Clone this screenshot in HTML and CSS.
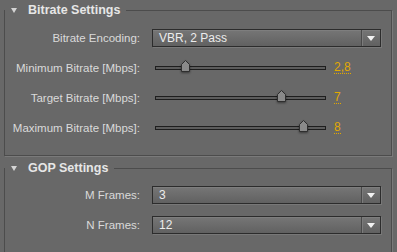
FILE: index.html
```html
<!DOCTYPE html>
<html lang="en">
<head>
	<meta charset="UTF-8">
	<title>Encoder settings</title>
	<link rel="stylesheet" href="styles.css">
</head>
<body>
	<fieldset class="group">
		<legend class="group-title"><span class="twisty"></span>Bitrate Settings</legend>
		<div class="row">
			<label class="row-label">Bitrate Encoding:</label>
			<div class="select"><span class="select-value">VBR, 2 Pass</span><span class="select-arrow"></span></div>
		</div>
		<div class="row">
			<label class="row-label">Minimum Bitrate [Mbps]:</label>
			<div class="slider">
				<div class="slider-track"></div>
				<svg class="slider-thumb" style="left: 26px" width="10" height="13" viewBox="0 0 10 13"><polygon points="0.5,4.5 4.5,0.5 8.5,4.5 8.5,11.5 0.5,11.5"/></svg>
			</div>
			<span class="slider-value">2,8</span>
		</div>
		<div class="row">
			<label class="row-label">Target Bitrate [Mbps]:</label>
			<div class="slider">
				<div class="slider-track"></div>
				<svg class="slider-thumb" style="left: 122px" width="10" height="13" viewBox="0 0 10 13"><polygon points="0.5,4.5 4.5,0.5 8.5,4.5 8.5,11.5 0.5,11.5"/></svg>
			</div>
			<span class="slider-value">7</span>
		</div>
		<div class="row">
			<label class="row-label">Maximum Bitrate [Mbps]:</label>
			<div class="slider">
				<div class="slider-track"></div>
				<svg class="slider-thumb" style="left: 144px" width="10" height="13" viewBox="0 0 10 13"><polygon points="0.5,4.5 4.5,0.5 8.5,4.5 8.5,11.5 0.5,11.5"/></svg>
			</div>
			<span class="slider-value">8</span>
		</div>
	</fieldset>

	<fieldset class="group gop">
		<legend class="group-title"><span class="twisty"></span>GOP Settings</legend>
		<div class="row">
			<label class="row-label">M Frames:</label>
			<div class="select"><span class="select-value">3</span><span class="select-arrow"></span></div>
		</div>
		<div class="row">
			<label class="row-label">N Frames:</label>
			<div class="select"><span class="select-value">12</span><span class="select-arrow"></span></div>
		</div>
	</fieldset>
</body>
</html>
```

FILE: styles.css
```css
body{
	margin: 0; padding: 0 5px 0 4px;
	background: #686868;
	font-family: "Liberation Sans", Arial, sans-serif;
	font-size: 11.5px;
	color: #dadada;
	overflow: hidden;
}
/* panel group */
.group{
	margin: 3px 0 0; padding: 6px 10px 12px 0;
	border: 1px solid #4c4c4c;
	box-shadow: 1px 1px 0 #7a7a7a;
	min-width: 0;
}
.group.gop{margin-top: 5px; padding-top: 5px;}
.group-title{
	display: flex; align-items: center;
	padding: 0 6px;
	font-size: 12.5px; font-weight: bold; line-height: 14px;
	color: #e6e6e6;
}
.twisty{
	width: 0; height: 0; margin-right: 11px;
	border-left: 3px solid transparent;
	border-right: 3px solid transparent;
	border-top: 5px solid #d4d4d4;
}
/* rows */
.row{display: flex; align-items: center; height: 30px;}
.row-label{width: 135px; margin-right: 12px; text-align: right; white-space: nowrap;}
/* dropdown */
.select{
	flex: 1; height: 16px;
	display: flex; align-items: center;
	border: 1px solid #2c2c2c;
	background: linear-gradient(#767676, #616161);
	box-shadow: inset 0 1px 0 #7e7e7e, 1px 1px 0 #787878;
	color: #ececec;
}
.select-value{flex: 1; padding-left: 6px; font-size: 12px;}
.select-arrow{
	width: 18px; height: 16px;
	border-left: 1px solid #4a4a4a;
	box-shadow: inset 1px 0 0 #7c7c7c;
	display: flex; align-items: center; justify-content: center;
}
.select-arrow::after{
	content: ""; width: 0; height: 0;
	border-left: 4px solid transparent;
	border-right: 4px solid transparent;
	border-top: 5px solid #f2f2f2;
}
/* slider */
.slider{position: relative; width: 171px; height: 14px; margin-left: 3px;}
.slider-track{
	position: absolute; left: 0; right: 0; top: 5px;
	height: 2px;
	border: 1px solid #1e1e1e;
	background: #5c5c5c;
}
.slider-thumb{
	position: absolute; top: -1px;
	fill: #8a8a8a; stroke: #2e2e2e; stroke-width: 1;
	filter: drop-shadow(0 1px 1px rgba(0,0,0,.45));
}
.slider-value{
	margin-left: 8px; margin-top: -2px;
	font-size: 12px; line-height: 12px;
	color: #e2a900;
	border-bottom: 1px dotted #e2a900;
}
```
